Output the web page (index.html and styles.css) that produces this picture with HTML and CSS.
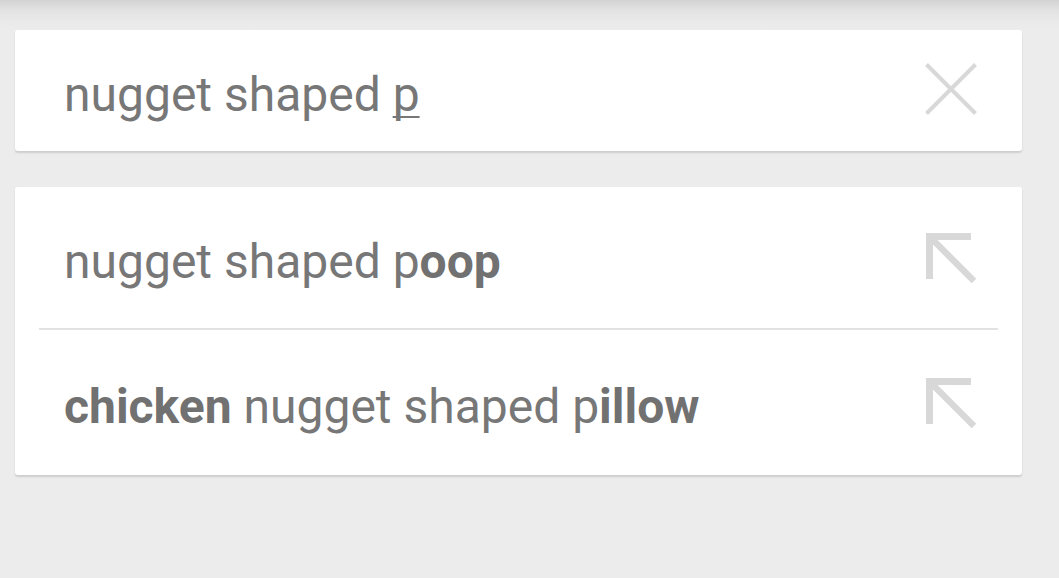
FILE: index.html
```html
<!DOCTYPE html>
<html>
<head>
<meta charset="utf-8">
<link rel="stylesheet" href="styles.css">
</head>
<body>
<div class="page">
  <div class="card search">
    <div class="query">nugget shaped <u class="comp">p</u></div>
    <svg class="clear" width="52" height="52" viewBox="0 0 52 52"><path d="M1.5 1.5 L50.5 50.5 M50.5 1.5 L1.5 50.5" stroke="#d8d8d8" stroke-width="4" fill="none"/></svg>
  </div>
  <div class="card suggestions">
    <div class="row">
      <div class="sugg">nugget shaped p<b>oop</b></div>
      <svg class="arrow" width="50" height="50" viewBox="0 0 50 50"><path d="M3.5 46 V3.5 H45" stroke="#d8d8d8" stroke-width="7" fill="none"/><path d="M6 6 L48 48" stroke="#d8d8d8" stroke-width="6.5" fill="none"/></svg>
    </div>
    <div class="divider"></div>
    <div class="row row2">
      <div class="sugg"><b>chicken</b> nugget shaped p<b>illow</b></div>
      <svg class="arrow" width="50" height="50" viewBox="0 0 50 50"><path d="M3.5 46 V3.5 H45" stroke="#d8d8d8" stroke-width="7" fill="none"/><path d="M6 6 L48 48" stroke="#d8d8d8" stroke-width="6.5" fill="none"/></svg>
    </div>
  </div>
</div>
</body>
</html>
```
FILE: styles.css
```css
html, body {
  margin: 0;
  padding: 0;
}
body {
  width: 1059px;
  height: 578px;
  overflow: hidden;
  background: linear-gradient(to bottom, #d3d3d3 0px, #e2e2e2 10px, #eaeaea 22px, #ececec 30px, #ececec 100%);
  font-family: Roboto, "Noto Sans", sans-serif;
  color: #777777;
}
.page {
  padding: 30px 37px 0 15px;
  display: flex;
  flex-direction: column;
  gap: 36px;
}
.card {
  background: #fff;
  border-radius: 3px;
  box-shadow: 0 2px 2px rgba(0, 0, 0, 0.13);
}
.search {
  height: 121px;
  display: flex;
  align-items: center;
  justify-content: space-between;
  padding: 0 45px 0 49px;
}
.query, .sugg {
  font-size: 48px;
  line-height: 56px;
  padding-top: 8px;
  white-space: nowrap;
}
.comp {
  text-decoration-line: underline;
  text-decoration-thickness: 2px;
  text-underline-offset: 5px;
  text-decoration-skip-ink: none;
}
.clear {
  display: block;
  margin-top: -3px;
}
.suggestions {
  display: flex;
  flex-direction: column;
  height: 288px;
}
.row {
  height: 141px;
  display: flex;
  align-items: center;
  justify-content: space-between;
  padding: 0 46px 0 49px;
}
.row2 {
  height: 145px;
}
.sugg b {
  font-weight: 700;
  color: #717171;
}
.arrow {
  display: block;
}
.divider {
  height: 2px;
  margin: 0 24px;
  background: #e2e2e2;
}
```
